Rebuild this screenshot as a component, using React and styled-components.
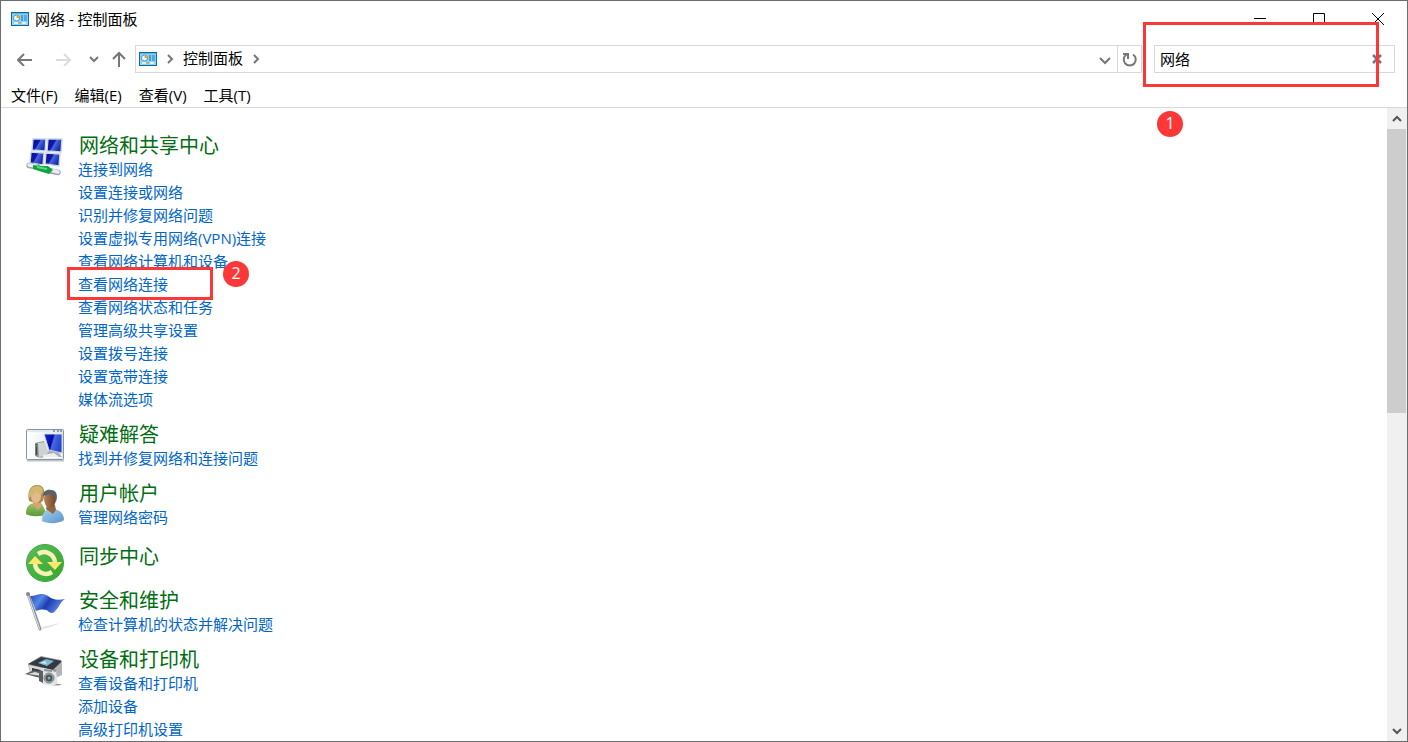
import React from "react";
import styled, { createGlobalStyle } from "styled-components";

const GlobalStyle = createGlobalStyle`
  * { box-sizing: border-box; }
  html, body { margin: 0; padding: 0; overflow: hidden; }
  body, button, input {
    font-family: "Open Sans", "Noto Sans CJK SC", sans-serif;
    font-size: 15px;
    color: #000;
  }
  button { border: 0; padding: 0; background: none; }
  svg { display: block; flex: none; }
`;

const Window = styled.div`
  height: 100vh;
  display: flex;
  flex-direction: column;
  border: 1px solid #6d6d6f;
  background: #fff;
`;

const TitleBar = styled.header`
  display: flex;
  align-items: center;
  flex: none;
  height: 36px;
  padding-left: 10px;
`;

const WindowTitle = styled.h1`
  flex: 1;
  margin: 0 0 0 6px;
  font-size: 15px;
  font-weight: 400;
  line-height: 24px;
`;

const CaptionButton = styled.button`
  display: flex;
  align-items: center;
  justify-content: center;
  width: 59px;
  height: 36px;
`;

const NavBar = styled.nav`
  display: flex;
  align-items: center;
  flex: none;
  height: 44px;
  padding: 0 12px 0 14px;
`;

const NavButtons = styled.div`
  display: flex;
  gap: 13px;
`;

const NavButton = styled.button`
  display: flex;
  align-items: center;
  justify-content: center;
  width: ${(p) => p.$width}px;
  height: 28px;
`;

const AddressBar = styled.div`
  flex: 1;
  display: flex;
  align-items: center;
  height: 28px;
  margin: 0 12px 0 7px;
  padding-left: 3px;
  border: 1px solid #d9d9d9;
`;

const Crumbs = styled.div`
  flex: 1;
  display: flex;
  align-items: center;
  gap: 8px;
`;

const Crumb = styled.a`
  padding-bottom: 2px;
  color: #000;
  text-decoration: none;
  line-height: 24px;
`;

const RefreshButton = styled(NavButton)`
  height: 26px;
  border-left: 1px solid #d9d9d9;
`;

const SearchBox = styled.div`
  position: relative;
  display: flex;
  align-items: center;
  width: 241px;
  height: 28px;
  border: 1px solid #d9d9d9;
`;

const SearchInput = styled.input`
  flex: 1;
  min-width: 0;
  height: 26px;
  padding: 0 5px 2px;
  border: 0;
  outline: 0;
  background: transparent;
`;

const MenuBar = styled.div`
  display: flex;
  gap: 17px;
  flex: none;
  height: 27px;
  padding: 2px 10px 0;
  border-bottom: 1px solid #d9d9d9;
`;

const MenuItem = styled.button`
  line-height: 24px;
  height: 24px;
`;

const Body = styled.div`
  flex: 1;
  min-height: 0;
  display: flex;
`;

const Results = styled.main`
  flex: 1;
  display: flex;
  flex-direction: column;
  gap: 6px;
  padding: 26px 24px 0;
  overflow-y: auto;
  scrollbar-width: none;
`;

const Category = styled.section`
  flex: none;
  display: flex;
  align-items: flex-start;
  gap: 13px;
`;

const CategoryIcon = styled.div`
  width: 40px;
  height: 40px;
  margin-top: 2px;
`;

const CategoryTitle = styled.h2`
  margin: ${(p) => (p.$alone ? 4 : 0)}px 0 0 1px;
  font-size: 20px;
  font-weight: 400;
  line-height: 24px;
  a { color: #006e12; text-decoration: none; }
`;

const TaskList = styled.ul`
  list-style: none;
  margin: 0;
  padding: 0 0 6px;
`;

const Task = styled.li`
  position: relative;
  height: 23px;
  line-height: 23px;
  a { color: #0066cc; text-decoration: none; white-space: nowrap; }
`;

const Highlight = styled.span`
  position: absolute;
  z-index: 1;
  left: ${(p) => p.$left}px;
  top: ${(p) => p.$top}px;
  width: ${(p) => p.$width}px;
  height: ${(p) => p.$height}px;
  border: 3px solid #fc3737;
  pointer-events: none;
`;

const Badge = styled.span`
  position: absolute;
  z-index: 2;
  left: ${(p) => p.$left}px;
  top: ${(p) => p.$top}px;
  width: 26px;
  height: 26px;
  border-radius: 50%;
  background: #fc3737;
  color: #fff;
  font-size: 16px;
  line-height: 24px;
  text-align: center;
`;

const ScrollBar = styled.div`
  display: flex;
  flex-direction: column;
  width: 20px;
  background: #f0f0f0;
`;

const ScrollButton = styled.button`
  display: flex;
  align-items: center;
  justify-content: center;
  height: 21px;
`;

const ScrollTrack = styled.div`
  flex: 1;
  padding-right: 1px;
`;

const ScrollThumb = styled.div`
  height: 48%;
  background: #cdcdcd;
`;

const chevrons = {
  down: "M1 3 L5 7 L9 3",
  up: "M1 7 L5 3 L9 7",
  right: "M3 1 L7 5 L3 9",
};

function Chevron({ dir, size = 10, color = "#777", weight = 2 }) {
  return (
    <svg width={size} height={size} viewBox="0 0 10 10" fill="none" stroke={color} strokeWidth={weight}>
      <path d={chevrons[dir]} />
    </svg>
  );
}

function UpArrow() {
  return (
    <svg width="14" height="16" fill="none" stroke="#777" strokeWidth="2">
      <path d="M7 16V3M1 8l6-6 6 6" />
    </svg>
  );
}

function PanelIcon() {
  return (
    <svg width="18" height="14" viewBox="0 0 18 14">
      <rect x=".5" y=".5" width="17" height="13" fill="#8bd2fa" stroke="#12699f" />
      <path d="M1 1h16v1H1z" fill="#5db5e8" />
      <circle cx="5.5" cy="6" r="3" fill="#fff" stroke="#1987c9" strokeWidth=".8" />
      <path d="M5.5 6V3a3 3 0 0 1 3 3z" fill="#f0a21c" />
      <path d="M10 4h2M10 6h2M10 8h2" stroke="#0b6db0" strokeWidth="1.2" />
      <path d="M13 4h3M13 6h3M13 8h3" stroke="#2480ba" strokeWidth="1.2" />
      <path d="M3 11h4" stroke="#fff" strokeWidth="1.4" />
      <path d="M7 11h3" stroke="#e6a12d" strokeWidth="1.4" />
      <path d="M11 11h4" stroke="#fff" strokeWidth="1.4" />
    </svg>
  );
}

function NetworkIcon() {
  const screens = ["M8 3l13 0-1 12-13-1z", "M23 3h14l-1 13-14-1z", "M6 16l13 1-1 12-13-2z", "M21 17l14 1-1 12-14-2z"];
  return (
    <svg width="40" height="40" viewBox="0 0 40 40">
      <defs>
        <linearGradient id="screen" x1="0" y1="0" x2="1" y2=".5">
          <stop offset="0" stopColor="#07108a" />
          <stop offset=".5" stopColor="#1219ae" />
          <stop offset=".55" stopColor="#4a68e0" />
          <stop offset="1" stopColor="#1028a8" />
        </linearGradient>
      </defs>
      {screens.map((d) => (
        <path key={d} d={d} fill="url(#screen)" stroke="#ccd5e3" strokeWidth="1.4" />
      ))}
      <path d="M4 29.500 L13 31 M24 34.500 L33 36.500" stroke="#9da7aa" strokeWidth="5.500" strokeLinecap="round" />
      <path d="M4 29 L11 30 M27 34.500 L33 36" stroke="#e9eef0" strokeWidth="3.500" strokeLinecap="round" />
      <path d="M8 29 L16 30 L23 30 L28 34 L24 38 L14 35 L8 33z" fill="#10a344" />
      <path d="M12 31 L22 33" stroke="#58dc79" strokeWidth="2" />
    </svg>
  );
}

function TroubleshootIcon() {
  return (
    <svg width="40" height="40" viewBox="0 0 40 40">
      <defs>
        <linearGradient id="monitor" x1="0" y1="0" x2="1" y2=".3">
          <stop offset="0" stopColor="#1c35cf" />
          <stop offset=".5" stopColor="#0408a0" />
          <stop offset=".58" stopColor="#4468e8" />
          <stop offset="1" stopColor="#2a46cc" />
        </linearGradient>
        <linearGradient id="desk" x1="0" y1="0" x2="1" y2="0">
          <stop offset="0" stopColor="#fff" />
          <stop offset="1" stopColor="#dde5eb" />
        </linearGradient>
      </defs>
      <path d="M2 35.500h37" stroke="#bfc4c8" strokeWidth="2" />
      <rect x="1.500" y="4.500" width="37" height="30" rx="1" fill="url(#desk)" stroke="#8795a2" />
      <path d="M2 6h36" stroke="#e3e9ee" strokeWidth="2" />
      <path d="M28 6h2M32 6h2M35 6h2" stroke="#728497" strokeWidth="1.4" />
      <path d="M3.500 8.500h33v24h-33z" fill="none" stroke="#fff" />
      <path d="M10 18l9-2 5 15-9 2-5-2z" fill="#8f9594" />
      <path d="M13 18l7-1 4 13-10 3z" fill="#cfd2d2" />
      <path d="M11.500 19v11" stroke="#41474a" strokeWidth="1.5" />
      <path d="M11 21h1.500" stroke="#52c46a" />
      <path d="M24 25l9 2 4 5H15l7-3z" fill="#a9b0b6" />
      <path d="M18 30l11-2 5 4H18z" fill="#eceff0" />
      <path d="M19 9h18v19l-13-3z" fill="url(#monitor)" stroke="#c6d1e2" />
    </svg>
  );
}

function UsersIcon() {
  return (
    <svg width="40" height="40" viewBox="0 0 40 40">
      <defs>
        <linearGradient id="greenShirt" x1="0" y1="0" x2="0" y2="1">
          <stop offset="0" stopColor="#9acb67" />
          <stop offset="1" stopColor="#5d9639" />
        </linearGradient>
        <linearGradient id="blueShirt" x1="0" y1="0" x2="1" y2="1">
          <stop offset="0" stopColor="#a5d0f1" />
          <stop offset="1" stopColor="#5a94ca" />
        </linearGradient>
        <linearGradient id="darkSkin">
          <stop offset="0" stopColor="#b58259" />
          <stop offset="1" stopColor="#724527" />
        </linearGradient>
      </defs>
      <path d="M1 29c0-6 3-9 8-10l8 1 5 10c-6 3-16 3-21 0z" fill="url(#greenShirt)" />
      <path d="M8 18h8l1 3-4 5-5-5z" fill="#d8a475" />
      <path d="M4 17C2 8 5 1 12 1c7 0 9 6 6 16l-3 2-8-1z" fill="#a98d4b" />
      <ellipse cx="11" cy="12" rx="5" ry="7" fill="#e5b98a" />
      <path d="M4 14C3 6 7 2 12 2c6 0 7 4 5 8-3 0-5-1-6-3-1 3-4 4-7 7z" fill="#d0b970" />
      <path d="M17 37c0-8 3-12 9-12 7 0 13 3 13 11-5 4-17 4-22 1z" fill="url(#blueShirt)" />
      <path d="M22 21h8l1 5-3 4-7-5z" fill="#95643f" />
      <ellipse cx="25" cy="15" rx="6" ry="9" fill="url(#darkSkin)" />
      <path d="M18 12c0-5 4-7 8-6 6 0 7 6 5 12l-2-6-4-2-7 2z" fill="#5a626a" />
    </svg>
  );
}

function SyncIcon() {
  return (
    <svg width="40" height="40" viewBox="0 0 40 40">
      <defs>
        <linearGradient id="syncDisc" x1="0" y1="0" x2="1" y2="1">
          <stop offset="0" stopColor="#58be57" />
          <stop offset="1" stopColor="#35a52f" />
        </linearGradient>
      </defs>
      <circle cx="20" cy="20" r="18.500" fill="url(#syncDisc)" stroke="#3fa744" />
      <path d="M13 11A11 11 0 0 1 30 19" fill="none" stroke="#f5f3b4" strokeWidth="4.500" />
      <path d="M27 29A11 11 0 0 1 10 21" fill="none" stroke="#f5f3b4" strokeWidth="4.500" />
      <path d="M3 21l7-8 8 8z" fill="#ffe76c" />
      <path d="M22 19h15l-7 8z" fill="#ffe76c" />
    </svg>
  );
}

function FlagIcon() {
  return (
    <svg width="40" height="40" viewBox="0 0 40 40">
      <defs>
        <linearGradient id="flagCloth" x1="0" y1="0" x2="1" y2=".4">
          <stop offset="0" stopColor="#2347b4" />
          <stop offset=".35" stopColor="#5288e8" />
          <stop offset=".6" stopColor="#1d3cae" />
          <stop offset="1" stopColor="#5a8ae6" />
        </linearGradient>
      </defs>
      <path d="M17 38c7-1 14-4 18-6-6 1-12 3-18 4z" fill="#e4e5e6" />
      <path d="M5 5c5 0 8-2 12-2 8 0 7 8 23 5-5 3-5 7-9 11-2 3-4 4-7 2-3-3-7-3-13-1z" fill="url(#flagCloth)" />
      <path d="M3 3l12 35" stroke="#8d949c" strokeWidth="3" strokeLinecap="round" />
      <path d="M2.500 3l12 35" stroke="#e5e9ee" strokeLinecap="round" />
      <circle cx="3" cy="3" r="2" fill="#858c96" />
    </svg>
  );
}

function PrinterIcon() {
  return (
    <svg width="40" height="40" viewBox="0 0 40 40">
      <path d="M3 14l13-8 20 4 1 14-8 4-24-5z" fill="#9b9fa2" />
      <path d="M3 14l13-7 21 4-9 9z" fill="#343a3f" />
      <path d="M13 13l8-4 8 2-7 5z" fill="#81b7d5" />
      <path d="M15 13l5-2 2 3z" fill="#cfe6ed" />
      <path d="M4 15l23 5v8L5 24z" fill="#d7d8d8" />
      <path d="M28 20l9-8v13l-9 4z" fill="#b2b4b5" />
      <path d="M7 18l13 3v4L7 22z" fill="#30363b" />
      <path d="M0 24l9-4 10 3v6z" fill="#5d6265" />
      <path d="M3 24l7-2 7 2v2z" fill="#dadcdc" />
      <path d="M15 21l3-3 13 3 2 13-3 2-13-2z" fill="#e3e4e4" />
      <path d="M14 20l4 1v12l-4-2z" fill="#5d6061" />
      <path d="M19 20l8 1M28 20l3 1" stroke="#8e9293" strokeWidth="2" />
      <circle cx="24" cy="28" r="5" fill="#b1b5b6" stroke="#777c7f" />
      <circle cx="24" cy="28" r="3.500" fill="#485158" />
      <circle cx="24" cy="28" r="1.500" fill="#84afb2" />
      <path d="M29 35c4 1 6 0 8-1" stroke="#ddd" />
    </svg>
  );
}

const categories = [
  {
    title: "网络和共享中心",
    Icon: NetworkIcon,
    tasks: [
      "连接到网络",
      "设置连接或网络",
      "识别并修复网络问题",
      "设置虚拟专用网络(VPN)连接",
      "查看网络计算机和设备",
      "查看网络连接",
      "查看网络状态和任务",
      "管理高级共享设置",
      "设置拨号连接",
      "设置宽带连接",
      "媒体流选项",
    ],
  },
  { title: "疑难解答", Icon: TroubleshootIcon, tasks: ["找到并修复网络和连接问题"] },
  { title: "用户帐户", Icon: UsersIcon, tasks: ["管理网络密码"] },
  { title: "同步中心", Icon: SyncIcon, tasks: [] },
  { title: "安全和维护", Icon: FlagIcon, tasks: ["检查计算机的状态并解决问题"] },
  { title: "设备和打印机", Icon: PrinterIcon, tasks: ["查看设备和打印机", "添加设备", "高级打印机设置"] },
];

const markedTask = "查看网络连接";

export default function App() {
  return (
    <Window>
      <GlobalStyle />
      <TitleBar>
        <PanelIcon />
        <WindowTitle>网络 - 控制面板</WindowTitle>
        <CaptionButton aria-label="最小化">
          <svg width="12" height="12" stroke="#000"><path d="M0 5.500h12" /></svg>
        </CaptionButton>
        <CaptionButton aria-label="最大化">
          <svg width="12" height="12" fill="none" stroke="#000"><path d="M.5 .5h11v11H.5z" /></svg>
        </CaptionButton>
        <CaptionButton aria-label="关闭">
          <svg width="12" height="12" stroke="#000"><path d="M0 0l12 12M12 0L0 12" /></svg>
        </CaptionButton>
      </TitleBar>

      <NavBar>
        <NavButtons>
          <NavButton $width={20} aria-label="后退">
            <svg width="16" height="14" fill="none" stroke="#777" strokeWidth="2"><path d="M15 8H1M7 2L1 8l6 6" /></svg>
          </NavButton>
          <NavButton $width={30} aria-label="前进">
            <svg width="16" height="14" fill="none" stroke="#dcdcdc" strokeWidth="2"><path d="M1 8h14M9 2l6 6-6 6" /></svg>
          </NavButton>
          <NavButton $width={6} aria-label="最近浏览的位置">
            <Chevron dir="down" />
          </NavButton>
          <NavButton $width={18} aria-label="上移">
            <UpArrow />
          </NavButton>
        </NavButtons>
        <AddressBar>
          <Crumbs>
            <PanelIcon />
            <Chevron dir="right" />
            <Crumb href="#panel">控制面板</Crumb>
            <Chevron dir="right" />
          </Crumbs>
          <NavButton $width={24} aria-label="展开">
            <svg width="12" height="12" fill="none" stroke="#777" strokeWidth="2"><path d="M1 5l5 5 5-5" /></svg>
          </NavButton>
          <RefreshButton $width={24} aria-label="刷新">
            <svg width="16" height="16" fill="none" stroke="#777" strokeWidth="2">
              <path d="M11 3.500A6 6 0 1 1 4.500 3.500" />
              <path d="M1 3h5v5" />
            </svg>
          </RefreshButton>
        </AddressBar>
        <SearchBox>
          <SearchInput type="text" aria-label="搜索" defaultValue="网络" />
          <NavButton $width={34} aria-label="清除">
            <svg width="10" height="10" stroke="#777" strokeWidth="2.500"><path d="M1 1l8 8M9 1L1 9" /></svg>
          </NavButton>
          <Highlight $left={-12} $top={-24} $width={236} $height={65} />
          <Badge $left={2} $top={65}>1</Badge>
        </SearchBox>
      </NavBar>

      <MenuBar>
        {["文件(F)", "编辑(E)", "查看(V)", "工具(T)"].map((label) => (
          <MenuItem key={label}>{label}</MenuItem>
        ))}
      </MenuBar>

      <Body>
        <Results>
          {categories.map(({ title, Icon, tasks }) => (
            <Category key={title}>
              <CategoryIcon><Icon /></CategoryIcon>
              <div>
                <CategoryTitle $alone={tasks.length === 0}><a href="#category">{title}</a></CategoryTitle>
                {tasks.length > 0 && (
                  <TaskList>
                    {tasks.map((task) => (
                      <Task key={task}>
                        <a href="#task">{task}</a>
                        {task === markedTask && (
                          <>
                            <Highlight $left={-11} $top={-6} $width={146} $height={33} />
                            <Badge $left={145} $top={-12}>2</Badge>
                          </>
                        )}
                      </Task>
                    ))}
                  </TaskList>
                )}
              </div>
            </Category>
          ))}
        </Results>
        <ScrollBar>
          <ScrollButton aria-label="向上滚动"><Chevron dir="up" color="#555" /></ScrollButton>
          <ScrollTrack><ScrollThumb /></ScrollTrack>
          <ScrollButton aria-label="向下滚动"><Chevron dir="down" color="#555" /></ScrollButton>
        </ScrollBar>
      </Body>
    </Window>
  );
}
